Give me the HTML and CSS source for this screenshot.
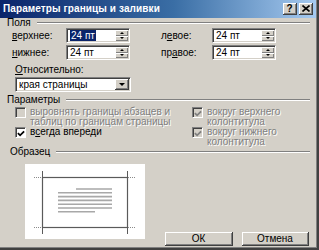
FILE: index.html
```html
<!DOCTYPE html>
<html lang="ru">

<head>
    <meta charset="UTF-8">
    <title>Параметры границы и заливки</title>
    <link rel="stylesheet" href="styles.css">
</head>

<body>
    <div class="dialog">
        <div class="titlebar">
            <span class="title">Параметры границы и заливки</span>
            <div class="caption_btns">
                <span class="caption_btn help">?</span>
                <span class="caption_btn close">
                    <svg width="8" height="7" viewBox="0 0 8 7"><path d="M0.5 0.5 L7.5 6.5 M7.5 0.5 L0.5 6.5" stroke="#000" stroke-width="1.6"/></svg>
                </span>
            </div>
        </div>

        <div class="content">
            <div class="group_label"><span>Поля</span></div>
            <div class="margins">
                <label><u>в</u>ерхнее:</label>
                <div class="spinbox"><span class="value"><span class="selected">24 пт</span></span><span class="spin_btns"><i class="up"></i><i class="down"></i></span></div>
                <label class="right">л<u>е</u>вое:</label>
                <div class="spinbox"><span class="value">24 пт</span><span class="spin_btns"><i class="up"></i><i class="down"></i></span></div>
                <label><u>н</u>ижнее:</label>
                <div class="spinbox"><span class="value">24 пт</span><span class="spin_btns"><i class="up"></i><i class="down"></i></span></div>
                <label class="right">пр<u>а</u>вое:</label>
                <div class="spinbox"><span class="value">24 пт</span><span class="spin_btns"><i class="up"></i><i class="down"></i></span></div>
            </div>

            <div class="relative_label"><u>О</u>тносительно:</div>
            <div class="combo"><span class="value">края страницы</span><span class="drop_btn"><i></i></span></div>

            <div class="group_label params"><span>Параметры</span></div>
            <div class="options">
                <div class="col">
                    <div class="option disabled">
                        <span class="checkbox"></span>
                        <span class="text">выровнять границы абзацев и<br>таблиц по границам страницы</span>
                    </div>
                    <div class="option">
                        <span class="checkbox"><svg width="9" height="9" viewBox="0 0 9 9"><path d="M1 4 L3.5 6.5 L8 2" fill="none" stroke="#000" stroke-width="2"/></svg></span>
                        <span class="text">в<u>с</u>егда впереди</span>
                    </div>
                </div>
                <div class="col">
                    <div class="option disabled">
                        <span class="checkbox"><svg width="9" height="9" viewBox="0 0 9 9"><path d="M1 4 L3.5 6.5 L8 2" fill="none" stroke="#808080" stroke-width="2"/></svg></span>
                        <span class="text">вокруг верхнего<br>колонтитула</span>
                    </div>
                    <div class="option disabled">
                        <span class="checkbox"><svg width="9" height="9" viewBox="0 0 9 9"><path d="M1 4 L3.5 6.5 L8 2" fill="none" stroke="#808080" stroke-width="2"/></svg></span>
                        <span class="text">вокруг нижнего<br>колонтитула</span>
                    </div>
                </div>
            </div>

            <div class="group_label sample"><span>Образец</span></div>
            <div class="bottom_row">
                <div class="preview">
                    <svg width="120" height="75" viewBox="0 0 120 75">
                        <rect x="17.5" y="13.5" width="85" height="50" fill="none" stroke="#5a5a5a" stroke-width="1.2"/>
                        <g stroke="#5a5a5a" stroke-width="1">
                            <path d="M17.5 7 V13 M17.5 64 V70 M102.5 7 V13 M102.5 64 V70"/>
                        </g>
                        <g stroke="#8a8a8a" stroke-width="1" stroke-dasharray="1 1">
                            <path d="M9 13.5 H17 M103 13.5 H111 M9 63.5 H17 M103 63.5 H111"/>
                        </g>
                        <g stroke="#a8a8a8" stroke-width="1.6">
                            <path d="M51 25 H87 M33 28.8 H87 M33 32.6 H87 M33 36.4 H87 M33 40.2 H87 M33 44 H87 M33 47.8 H70"/>
                        </g>
                    </svg>
                </div>
                <div class="buttons">
                    <button class="btn ok">ОК</button>
                    <button class="btn cancel">Отмена</button>
                </div>
            </div>
        </div>
    </div>
</body>

</html>
```

FILE: styles.css
```css
body {
    margin: 0;
    background: #d4d0c8;
    font-family: "Liberation Sans", Arial, sans-serif;
    font-size: 10px;
}

.dialog {
    width: 319px;
    height: 250px;
    box-sizing: border-box;
    padding: 0 3px 2px 0;
    background: #d4d0c8;
    box-shadow: inset -2px -2px #404040, inset -3px -3px #808080;
    overflow: hidden;
}

.titlebar {
    height: 18px;
    display: flex;
    align-items: center;
    justify-content: space-between;
    padding: 0 3px 1px 3px;
    box-sizing: border-box;
    background: linear-gradient(to right, #0a246a 0%, #3a6ea5 55%, #a6caf0 100%);
}

.title {
    color: #fff;
    font-weight: bold;
    font-size: 10px;
    line-height: 12px;
    letter-spacing: 0.1px;
}

.caption_btns {
    display: flex;
    gap: 1px;
    padding-top: 1px;
}

.caption_btn {
    width: 14px;
    height: 12px;
    box-sizing: border-box;
    background: #d4d0c8;
    border-right: 1px solid #404040;
    border-bottom: 1px solid #404040;
    box-shadow: inset 1px 1px #fff, inset -1px -1px #808080;
    display: flex;
    align-items: center;
    justify-content: center;
}

.caption_btn.help {
    font-weight: bold;
    font-size: 10px;
    line-height: 10px;
}

.caption_btn.close {
    margin-left: 1px;
}

.group_label {
    display: flex;
    align-items: center;
    gap: 6px;
    height: 10px;
    line-height: 10px;
    padding-left: 7px;
    margin-right: 6px;
}

.group_label::after {
    content: "";
    flex: 1;
    border-top: 1px solid #808080;
    border-bottom: 1px solid #fff;
}

.margins {
    display: grid;
    grid-template-columns: 54px 64px 82px 64px;
    grid-template-rows: 15px 15px;
    row-gap: 2px;
    align-items: center;
    padding-left: 12px;
}

.margins label.right {
    padding-left: 31px;
}

.spinbox, .combo {
    height: 15px;
    box-sizing: border-box;
    display: flex;
    background: #fff;
    border-top: 1px solid #808080;
    border-left: 1px solid #808080;
    border-right: 1px solid #fff;
    border-bottom: 1px solid #fff;
    box-shadow: inset 1px 1px #404040, inset -1px -1px #d4d0c8;
    padding: 1px;
}

.value {
    flex: 1;
    padding-left: 2px;
    line-height: 11px;
}

.selected {
    background: #0a246a;
    color: #fff;
    padding: 0 1px;
}

.spin_btns {
    width: 13px;
    display: flex;
    flex-direction: column;
}

.spin_btns i {
    flex: 1;
    background: #d4d0c8;
    box-shadow: inset 1px 1px #fff, inset -1px -1px #808080;
    display: flex;
    align-items: center;
    justify-content: center;
}

.spin_btns i::before {
    content: "";
    border-left: 2px solid transparent;
    border-right: 2px solid transparent;
}

.spin_btns .up::before {
    border-bottom: 2px solid #000;
}

.spin_btns .down::before {
    border-top: 2px solid #000;
}

.relative_label {
    padding-left: 15px;
    margin-top: 5px;
    line-height: 10px;
}

.combo {
    width: 116px;
    margin: 2px 0 0 15px;
}

.drop_btn {
    width: 13px;
    background: #d4d0c8;
    border-right: 1px solid #404040;
    border-bottom: 1px solid #404040;
    box-shadow: inset 1px 1px #fff, inset -1px -1px #808080;
    display: flex;
    align-items: center;
    justify-content: center;
}

.drop_btn i {
    border-left: 3px solid transparent;
    border-right: 3px solid transparent;
    border-top: 3px solid #000;
}

.group_label.params {
    margin-top: 3px;
}

.options {
    display: flex;
    margin-top: 2px;
    padding-left: 15px;
}

.options .col {
    display: flex;
    flex-direction: column;
}

.options .col:first-child {
    width: 177px;
}

.option {
    display: flex;
    gap: 4px;
    line-height: 10px;
    min-height: 20px;
}

.option.disabled .text {
    color: #808080;
    text-shadow: 1px 1px #fff;
}

.checkbox {
    width: 11px;
    height: 11px;
    box-sizing: border-box;
    flex: none;
    background: #fff;
    border-top: 1px solid #808080;
    border-left: 1px solid #808080;
    border-right: 1px solid #fff;
    border-bottom: 1px solid #fff;
    box-shadow: inset 1px 1px #404040;
    display: flex;
    align-items: center;
    justify-content: center;
    padding: 1px 0 0 1px;
}

.option.disabled .checkbox {
    background: #d4d0c8;
}

.group_label.sample {
    padding-left: 10px;
}

.bottom_row {
    display: flex;
    height: 89px;
    padding-left: 25px;
}

.preview {
    width: 120px;
    height: 75px;
    margin-top: 7px;
    background: #fff;
}

.preview svg {
    display: block;
}

.buttons {
    display: flex;
    gap: 9px;
    align-self: flex-end;
    margin-left: 20px;
}

.btn {
    height: 14px;
    box-sizing: border-box;
    padding: 0;
    font-family: "Liberation Sans", Arial, sans-serif;
    font-size: 10px;
    line-height: 11px;
    background: #d4d0c8;
    border: 0;
    border-right: 1px solid #404040;
    border-bottom: 1px solid #404040;
    box-shadow: inset 1px 1px #fff, inset -1px -1px #808080;
}

.btn.ok {
    width: 68px;
}

.btn.cancel {
    width: 67px;
}
```
